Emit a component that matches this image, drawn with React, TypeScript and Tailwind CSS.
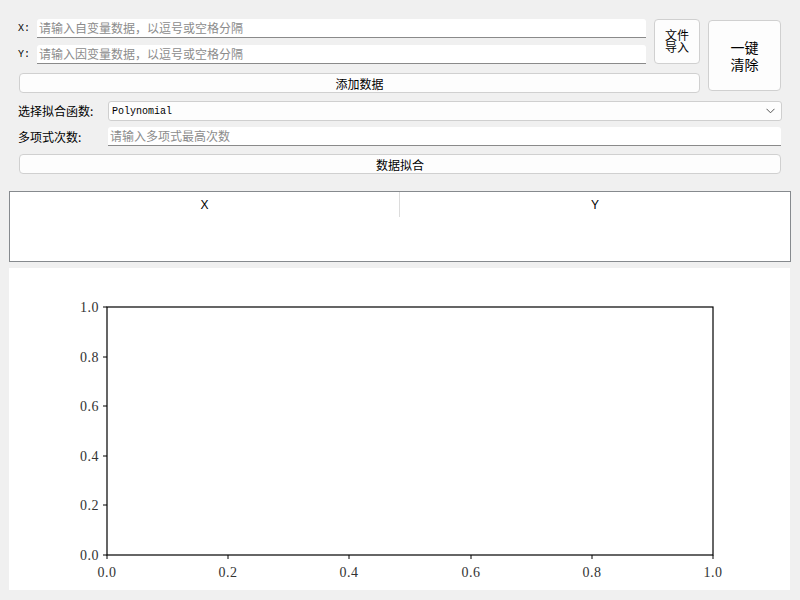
import React from 'react';

const cjk = "font-['Microsoft_YaHei','Noto_Sans_CJK_SC',sans-serif]";
const mono = "font-['Liberation_Mono','Noto_Sans_CJK_SC',monospace]";

function LineInput({ placeholder, className }: { placeholder: string; className?: string }) {
  return (
    <div
      className={`h-[19px] bg-white border-b border-[#8a8a8a] rounded-t-[3px] flex items-center px-[2px] text-[12px] text-[#8c8c8c] ${cjk} ${className ?? ''}`}
    >
      {placeholder}
    </div>
  );
}

function Btn({ children, className }: { children: React.ReactNode; className?: string }) {
  return (
    <div
      className={`bg-[#fdfdfd] border border-[#d0d0d0] rounded-[4px] flex items-center justify-center text-[12px] text-black leading-[13px] ${cjk} ${className ?? ''}`}
    >
      {children}
    </div>
  );
}

const yTicks = [
  { v: '1.0', y: 307 },
  { v: '0.8', y: 357 },
  { v: '0.6', y: 406 },
  { v: '0.4', y: 456 },
  { v: '0.2', y: 505 },
  { v: '0.0', y: 555 },
];
const xTicks = [
  { v: '0.0', x: 107 },
  { v: '0.2', x: 228 },
  { v: '0.4', x: 349 },
  { v: '0.6', x: 471 },
  { v: '0.8', x: 592 },
  { v: '1.0', x: 713 },
];

function Plot() {
  // coords relative to the white plot panel (starts at x=9, y=268)
  const ox = 9;
  const oy = 268;
  return (
    <svg width="781" height="322" className="block">
      <rect x={107 - ox} y={307 - oy} width={606} height={248} fill="white" stroke="black" strokeWidth="1.2" />
      {yTicks.map((t) => (
        <g key={t.v}>
          <line x1={103 - ox} x2={107 - ox} y1={t.y - oy} y2={t.y - oy} stroke="black" strokeWidth="1" />
          <text
            x={99 - ox}
            y={t.y - oy + 5}
            textAnchor="end"
            fontSize="14"
            letterSpacing="0.5"
            fontFamily="'Liberation Serif', serif"
            fill="#333"
          >
            {t.v}
          </text>
        </g>
      ))}
      {xTicks.map((t) => (
        <g key={t.v}>
          <line x1={t.x - ox} x2={t.x - ox} y1={555 - oy} y2={559 - oy} stroke="black" strokeWidth="1" />
          <text
            x={t.x - ox}
            y={577 - oy}
            textAnchor="middle"
            fontSize="14"
            letterSpacing="0.5"
            fontFamily="'Liberation Serif', serif"
            fill="#333"
          >
            {t.v}
          </text>
        </g>
      ))}
    </svg>
  );
}

export default function App() {
  return (
    <div className="w-[800px] h-[600px] bg-[#f0f0f0] flex flex-col overflow-hidden">
      {/* data input block */}
      <div className="flex pl-[18px] pt-[19px] gap-[8px]">
        <div className="w-[682px] flex flex-col">
          <div className="flex gap-[8px]">
            <div className="w-[628px] flex flex-col gap-[7px]">
              <div className="flex items-center">
                <span className={`w-[19px] text-[10px] text-black ${mono}`}>X:</span>
                <LineInput placeholder="请输入自变量数据，以逗号或空格分隔" className="flex-1" />
              </div>
              <div className="flex items-center">
                <span className={`w-[19px] text-[10px] text-black ${mono}`}>Y:</span>
                <LineInput placeholder="请输入因变量数据，以逗号或空格分隔" className="flex-1" />
              </div>
            </div>
            <Btn className="w-[46px] h-[45px] pb-[1px]">
              <span className="block w-[25px] text-center text-[12px] leading-[12px] break-all">文件导入</span>
            </Btn>
          </div>
          <Btn className="mt-[9px] ml-[1px] h-[20px] w-[681px]">添加数据</Btn>
        </div>
        <Btn className="w-[73px] h-[71px] mt-[1px]">
          <span className="block w-[29px] text-center text-[14px] leading-[17px] break-all">一键清除</span>
        </Btn>
      </div>

      {/* fit options */}
      <div className="flex items-center pl-[18px] mt-[8px]">
        <span className={`w-[90px] text-[12px] text-black ${cjk}`}>选择拟合函数:</span>
        <div className="w-[674px] h-[20px] bg-[#fdfdfd] border border-[#cfcfcf] rounded-[3px] flex items-center justify-between pl-[3px] pr-[6px]">
          <span className={`text-[10px] text-black ${mono}`}>Polynomial</span>
          <svg width="9" height="6" viewBox="0 0 9 6">
            <path d="M0.5 0.8 L4.5 4.8 L8.5 0.8" fill="none" stroke="#555" strokeWidth="1" />
          </svg>
        </div>
      </div>
      <div className="flex items-center pl-[18px] mt-[6px]">
        <span className={`w-[90px] text-[12px] text-black ${cjk}`}>多项式次数:</span>
        <LineInput placeholder="请输入多项式最高次数" className="w-[673px]" />
      </div>
      <Btn className="mt-[8px] ml-[19px] h-[20px] w-[762px]">数据拟合</Btn>

      {/* data table */}
      <div className="mt-[17px] ml-[9px] w-[782px] h-[71px] bg-white border border-[#868a8e]">
        <div className="flex h-[25px]">
          <div className="w-[390px] flex items-center justify-center text-[12px] text-black font-['Liberation_Sans',sans-serif] border-r border-[#dcdcdc]">
            X
          </div>
          <div className="flex-1 flex items-center justify-center text-[12px] text-black font-['Liberation_Sans',sans-serif]">
            Y
          </div>
        </div>
      </div>

      {/* plot */}
      <div className="mt-[6px] ml-[9px] w-[781px] h-[322px] bg-white">
        <Plot />
      </div>
    </div>
  );
}
